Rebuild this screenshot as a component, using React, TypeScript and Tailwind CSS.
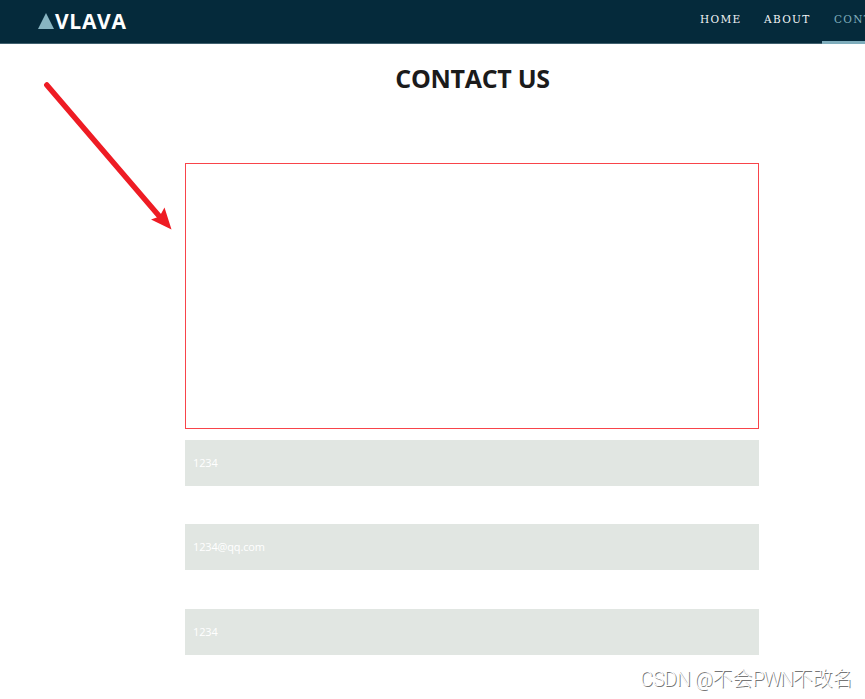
const fields = ["1234", "1234@qq.com", "1234"];

function Header() {
  return (
    <header className="flex h-11 items-start overflow-hidden bg-[#052a3b] shadow-[inset_0_-1px_0_#40606e]">
      <div className="ml-[38px] flex w-[650px] shrink-0 pt-[9px]">
        <svg className="mt-1 h-4 w-4 shrink-0" viewBox="0 0 16 16">
          <path d="M8 0L16 16H0Z" fill="#88b5c2" />
        </svg>
        <span className="ml-px font-['Open_Sans',sans-serif] text-[21px] leading-6 font-bold tracking-[0.7px] text-white">
          VLAVA
        </span>
      </div>
      <nav className="flex h-11 shrink-0 font-['DejaVu_Serif_Condensed','DejaVu_Serif',serif] text-[11.7px] leading-[39px] tracking-[1.3px] text-[#f2f5f6]">
        <a className="w-16 shrink-0 pl-3">HOME</a>
        <a className="w-[70px] shrink-0 pl-3">ABOUT</a>
        <a className="h-11 w-[90px] shrink-0 border-b-[3px] border-[#7fadbc] pl-3 text-[#7fadbc]">CONTACT</a>
      </nav>
    </header>
  );
}

export default function App() {
  return (
    <div className="relative h-[699px] w-[865px] overflow-hidden bg-white font-['Open_Sans',sans-serif]">
      <Header />
      <main className="ml-[185px] w-[574px]">
        <h1 className="pt-4 pl-px text-center text-[25px] leading-9 font-bold tracking-[-0.3px] text-[#1b1b1b]">CONTACT US</h1>
        <div className="mt-[67px] h-[266px] border border-[#f8444a]" />
        <form className="mt-[11px] flex flex-col gap-[38.4px]">
          {fields.map((value, i) => (
            <div key={i} className="flex h-[46px] items-center bg-[#e1e6e2] px-2 text-[11px] tracking-[-0.15px] text-white">
              {value}
            </div>
          ))}
        </form>
      </main>
      <svg className="absolute top-[70px] left-[30px] h-[170px] w-[160px]" viewBox="30 70 160 170">
        <path d="M46.8 85L160 217" stroke="#ee1c24" strokeWidth="5.5" strokeLinecap="round" />
        <path d="M171.5 229.5L151 219.5L159.5 216.5L164.5 207.5Z" fill="#ee1c24" />
      </svg>
      <div className="absolute top-[665px] left-[640px] font-['Roboto','Noto_Sans_CJK_SC',sans-serif] text-[20px] leading-7 font-light whitespace-nowrap text-white [text-shadow:1px_1px_0_#777]">
        <span className="tracking-[-0.5px]">CSDN @</span>不会<span className="tracking-[-1.4px]">PWN</span>不改名
      </div>
    </div>
  );
}
